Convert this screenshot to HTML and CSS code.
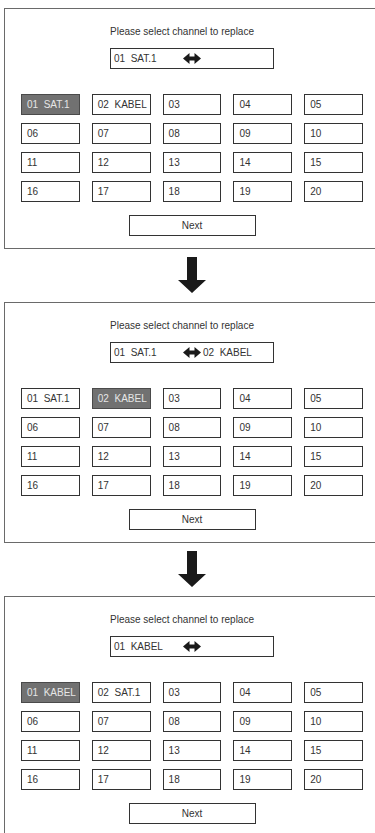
FILE: index.html
```html
<!DOCTYPE html>
<html>
	<head>
		<meta charset="utf-8" />
		<title>Channel replace</title>
		<link rel="stylesheet" href="styles.css">
	</head>
	<body>
		<div class="steps">

			<!-- step 1 -->
			<div class="panel">
				<div class="head">
					<div class="prompt">Please select channel to replace</div>
					<div class="swap">
						<span class="from">01&nbsp; SAT.1</span>
						<svg class="dbl" width="18" height="11" viewBox="0 0 18 11"><path d="M0 5.5L6.5 0V3.5H11.5V0L18 5.5L11.5 11V7.5H6.5V11Z" fill="#1a1a1a"/></svg>
					</div>
				</div>
				<div class="grid">
					<div class="cell sel">01&nbsp; SAT.1</div>
					<div class="cell">02&nbsp; KABEL</div>
					<div class="cell">03</div>
					<div class="cell">04</div>
					<div class="cell">05</div>
					<div class="cell">06</div>
					<div class="cell">07</div>
					<div class="cell">08</div>
					<div class="cell">09</div>
					<div class="cell">10</div>
					<div class="cell">11</div>
					<div class="cell">12</div>
					<div class="cell">13</div>
					<div class="cell">14</div>
					<div class="cell">15</div>
					<div class="cell">16</div>
					<div class="cell">17</div>
					<div class="cell">18</div>
					<div class="cell">19</div>
					<div class="cell">20</div>
				</div>
				<div class="next">Next</div>
			</div>

			<div class="down">
				<svg width="28" height="36" viewBox="0 0 28 36"><path d="M9 0H19V23H28L14 36L0 23H9Z" fill="#1a1a1a"/></svg>
			</div>

			<!-- step 2 -->
			<div class="panel">
				<div class="head">
					<div class="prompt">Please select channel to replace</div>
					<div class="swap">
						<span class="from">01&nbsp; SAT.1</span>
						<svg class="dbl" width="18" height="11" viewBox="0 0 18 11"><path d="M0 5.5L6.5 0V3.5H11.5V0L18 5.5L11.5 11V7.5H6.5V11Z" fill="#1a1a1a"/></svg>
						<span class="to">02&nbsp; KABEL</span>
					</div>
				</div>
				<div class="grid">
					<div class="cell">01&nbsp; SAT.1</div>
					<div class="cell sel">02&nbsp; KABEL</div>
					<div class="cell">03</div>
					<div class="cell">04</div>
					<div class="cell">05</div>
					<div class="cell">06</div>
					<div class="cell">07</div>
					<div class="cell">08</div>
					<div class="cell">09</div>
					<div class="cell">10</div>
					<div class="cell">11</div>
					<div class="cell">12</div>
					<div class="cell">13</div>
					<div class="cell">14</div>
					<div class="cell">15</div>
					<div class="cell">16</div>
					<div class="cell">17</div>
					<div class="cell">18</div>
					<div class="cell">19</div>
					<div class="cell">20</div>
				</div>
				<div class="next">Next</div>
			</div>

			<div class="down">
				<svg width="28" height="36" viewBox="0 0 28 36"><path d="M9 0H19V23H28L14 36L0 23H9Z" fill="#1a1a1a"/></svg>
			</div>

			<!-- step 3 -->
			<div class="panel">
				<div class="head">
					<div class="prompt">Please select channel to replace</div>
					<div class="swap">
						<span class="from">01&nbsp; KABEL</span>
						<svg class="dbl" width="18" height="11" viewBox="0 0 18 11"><path d="M0 5.5L6.5 0V3.5H11.5V0L18 5.5L11.5 11V7.5H6.5V11Z" fill="#1a1a1a"/></svg>
					</div>
				</div>
				<div class="grid">
					<div class="cell sel">01&nbsp; KABEL</div>
					<div class="cell">02&nbsp; SAT.1</div>
					<div class="cell">03</div>
					<div class="cell">04</div>
					<div class="cell">05</div>
					<div class="cell">06</div>
					<div class="cell">07</div>
					<div class="cell">08</div>
					<div class="cell">09</div>
					<div class="cell">10</div>
					<div class="cell">11</div>
					<div class="cell">12</div>
					<div class="cell">13</div>
					<div class="cell">14</div>
					<div class="cell">15</div>
					<div class="cell">16</div>
					<div class="cell">17</div>
					<div class="cell">18</div>
					<div class="cell">19</div>
					<div class="cell">20</div>
				</div>
				<div class="next">Next</div>
			</div>

		</div>
	</body>
</html>
```

FILE: styles.css
```css
html, body {
	margin: 0;
	background: #fff;
}
body {
	font-family: "Liberation Sans", Arial, Helvetica, sans-serif;
	font-size: 10px;
	color: #333;
}
.steps {
	padding: 8px 0 0 4px;
}

.panel {
	padding: 17px 12px 12px 16px;
	border: 1px solid #6a6a6a;
	border-right: none;
	display: flex;
	flex-direction: column;
	align-items: center;
}
.head {
	width: 164px;
	display: flex;
	flex-direction: column;
	gap: 10px;
}
.prompt {
	line-height: 12px;
	white-space: nowrap;
}
.swap {
	box-sizing: border-box;
	height: 21px;
	border: 1px solid #333;
	padding-left: 3px;
	display: flex;
	align-items: center;
}
.swap .from {
	width: 69px;
	white-space: nowrap;
}
.swap .dbl {
	flex: none;
}
.swap .to {
	margin-left: 2px;
	white-space: nowrap;
}

/* channel grid */
.grid {
	width: 342px;
	margin-top: 25px;
	display: grid;
	grid-template-columns: repeat(5, 1fr);
	column-gap: 12px;
	row-gap: 8px;
}
.cell {
	box-sizing: border-box;
	height: 21px;
	border: 1px solid #333;
	padding-left: 5px;
	display: flex;
	align-items: center;
	white-space: nowrap;
}
.cell.sel {
	background: #717171;
	border-color: #4a4a4a;
	color: #e6e6e6;
}
.next {
	box-sizing: border-box;
	margin-top: 13px;
	width: 127px;
	height: 21px;
	border: 1px solid #333;
	display: flex;
	align-items: center;
	justify-content: center;
}

/* arrow between steps */
.down {
	height: 53px;
	padding: 8px 0 0 4px;
	box-sizing: border-box;
	display: flex;
	justify-content: center;
	align-items: flex-start;
}
```
